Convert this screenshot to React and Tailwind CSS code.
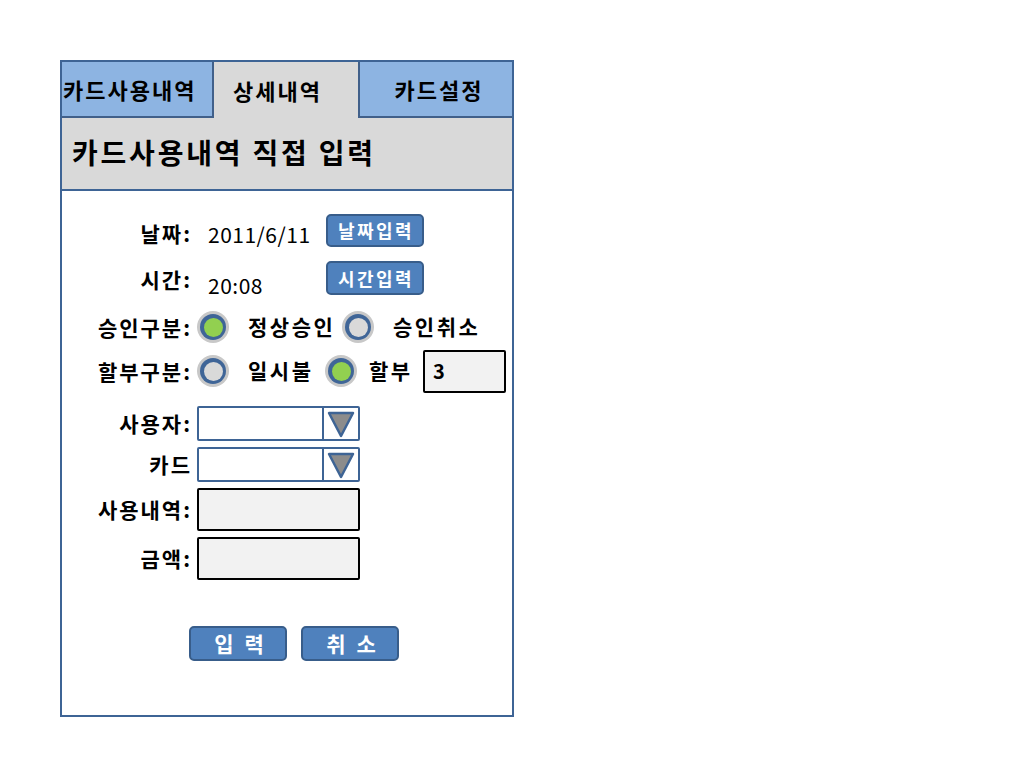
import React from "react";

const font = { fontFamily: '"Noto Sans CJK KR", "Noto Sans", sans-serif' };

function Radio({ checked }) {
    return (
        <div className="w-[32px] h-[32px] rounded-full bg-[#c8c8c8] flex items-center justify-center shrink-0">
            <div className="w-[26px] h-[26px] rounded-full bg-[#3f6597] flex items-center justify-center">
                <div
                    className={`w-[19px] h-[19px] rounded-full ${
                        checked ? "bg-[#92d050]" : "bg-[#d9d9d9]"
                    }`}
                />
            </div>
        </div>
    );
}

function BlueButton({ children, className = "" }) {
    return (
        <div
            className={`bg-[#4f81bd] border-2 border-[#385d8a] rounded-[5px] text-white font-bold flex items-center justify-center shrink-0 ${className}`}
        >
            {children}
        </div>
    );
}

function Dropdown() {
    return (
        <div className="w-[163px] h-[35px] border-2 border-[#3e6495] bg-white flex rounded-[2px]">
            <div className="flex-1" />
            <div className="w-[36px] border-l-2 border-[#3e6495] flex items-center justify-center">
                <svg width="28" height="28" viewBox="0 0 28 28">
                    <polygon
                        points="2,3 26,3 14,26"
                        fill="#8c8c8c"
                        stroke="#3e6495"
                        strokeWidth="2.5"
                        strokeLinejoin="round"
                    />
                </svg>
            </div>
        </div>
    );
}

function TextBox({ className = "", children }) {
    return (
        <div
            className={`border-[2.5px] border-black bg-[#f2f2f2] rounded-[2px] shrink-0 ${className}`}
        >
            {children}
        </div>
    );
}

function Row({ label, className = "", children }) {
    return (
        <div className={`flex items-center ${className}`}>
            <div className="w-[130px] text-right text-[21px] font-bold text-black leading-none tracking-[2px]">
                {label}
            </div>
            <div className="flex items-center pl-[5px]">{children}</div>
        </div>
    );
}

export default function App() {
    return (
        <div className="w-[1024px] h-[768px] bg-white pt-[60px] pl-[60px]" style={font}>
            <div className="w-[454px] h-[657px] border-2 border-[#3e6495] flex flex-col">
                {/* tabs */}
                <div className="flex h-[56px] text-[22px] font-bold text-black tracking-[2px]">
                    <div className="w-[152px] bg-[#8db4e2] border-r-2 border-b-2 border-[#41608a] flex items-center pl-[1px]">
                        카드사용내역
                    </div>
                    <div className="w-[144px] bg-[#d9d9d9] flex items-center pl-[19px]">
                        상세내역
                    </div>
                    <div className="flex-1 bg-[#8db4e2] border-l-2 border-b-2 border-[#41608a] flex items-center justify-center pl-[6px]">
                        카드설정
                    </div>
                </div>

                {/* header */}
                <div className="h-[73px] bg-[#d9d9d9] border-b-2 border-[#3e6495] flex items-center pl-[10px] pb-[4px] text-[28px] font-bold text-black tracking-[2.8px]">
                    카드사용내역 직접 입력
                </div>

                {/* form */}
                <div className="flex flex-col pt-[24px]">
                    <Row label="날짜:" className="h-[36px]">
                        <span className="text-[21px] w-[129px] pl-[11px] pt-[4px] tracking-[0.5px]">2011/6/11</span>
                        <BlueButton className="w-[98px] h-[33px] text-[18px] tracking-[2.5px] pl-[2px] -mt-[6px]">
                            날짜입력
                        </BlueButton>
                    </Row>
                    <Row label="시간:" className="h-[36px] mt-[10px]">
                        <span className="text-[21px] w-[129px] pl-[11px] pt-[14px] tracking-[0.5px]">20:08</span>
                        <BlueButton className="w-[98px] h-[34px] text-[18px] tracking-[2.5px] pl-[2px] -mt-[2px]">
                            시간입력
                        </BlueButton>
                    </Row>
                    <Row label="승인구분:" className="h-[40px] mt-[10px]">
                        <Radio checked />
                        <span className="text-[21px] font-bold ml-[19px] w-[94px] tracking-[2.5px]">정상승인</span>
                        <Radio />
                        <span className="text-[21px] font-bold ml-[19px] tracking-[2.5px]">승인취소</span>
                    </Row>
                    <Row label="할부구분:" className="h-[44px] mt-[2px]">
                        <Radio />
                        <span className="text-[21px] font-bold ml-[19px] w-[77px] tracking-[2.5px]">일시불</span>
                        <Radio checked />
                        <span className="text-[21px] font-bold ml-[12px] w-[44px] tracking-[2.5px]">할부</span>
                        <TextBox className="w-[83px] h-[43px] ml-[10px] flex items-center pl-[8px] text-[20px] font-bold">
                            3
                        </TextBox>
                    </Row>
                    <Row label="사용자:" className="h-[35px] mt-[13px]">
                        <Dropdown />
                    </Row>
                    <Row label="카드" className="h-[35px] mt-[6px]">
                        <Dropdown />
                    </Row>
                    <Row label="사용내역:" className="h-[43px] mt-[6px]">
                        <TextBox className="w-[163px] h-[43px]" />
                    </Row>
                    <Row label="금액:" className="h-[43px] mt-[6px]">
                        <TextBox className="w-[163px] h-[43px]" />
                    </Row>

                    <div className="flex gap-[14px] pl-[127px] mt-[46px]">
                        <BlueButton className="w-[98px] h-[35px] text-[21px] tracking-[11px] pl-[13px]">
                            입력
                        </BlueButton>
                        <BlueButton className="w-[98px] h-[35px] text-[21px] tracking-[11px] pl-[13px]">
                            취소
                        </BlueButton>
                    </div>
                </div>
            </div>
        </div>
    );
}
